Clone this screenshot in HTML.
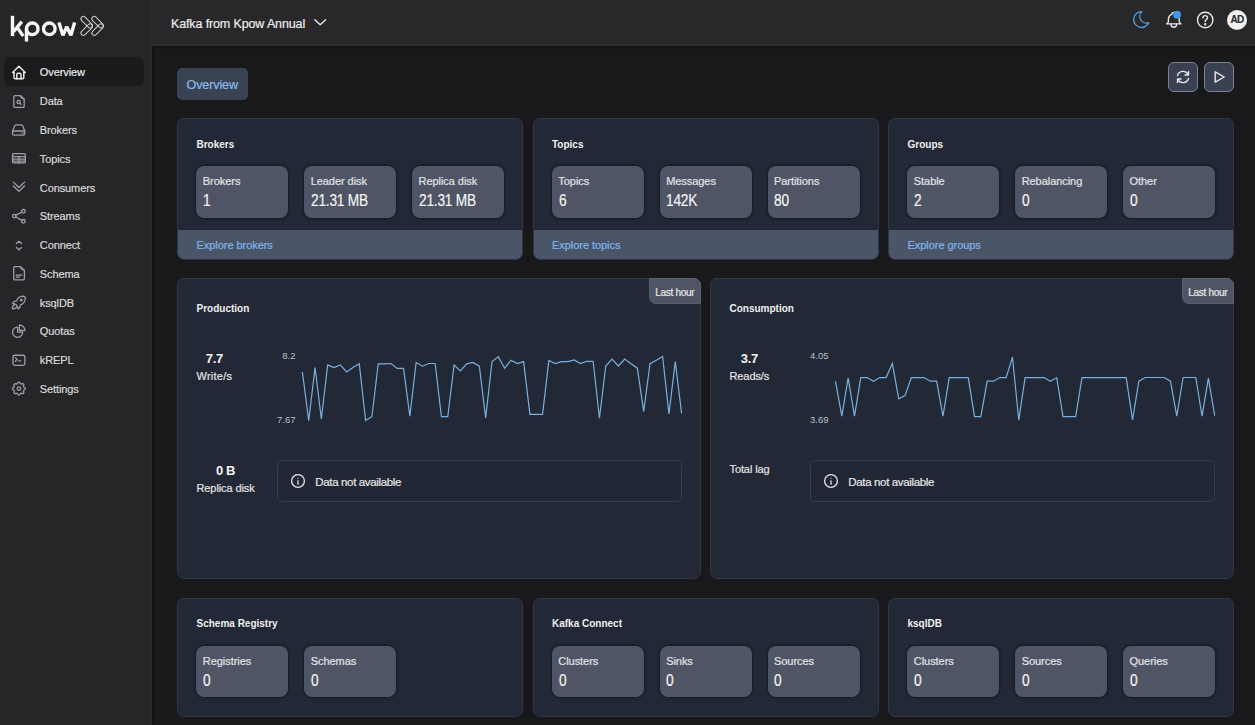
<!DOCTYPE html>
<html><head><meta charset="utf-8">
<style>
*{box-sizing:border-box;margin:0;padding:0}
html,body{width:1255px;height:725px;overflow:hidden;background:#19191b;font-family:"Liberation Sans",sans-serif;color:#e6e6e6;position:relative;-webkit-text-stroke:0.2px currentColor}
.abs{position:absolute}
#side{position:absolute;left:0;top:0;width:152px;height:725px;background:#262628;border-right:2px solid #2c2c2e;box-shadow:1px 0 1.5px rgba(0,0,0,0.45)}
#head{position:absolute;left:152px;top:0;width:1103px;height:46px;background:#28282a;border-bottom:2px solid #2e2e30;box-shadow:0 1px 1.5px rgba(0,0,0,0.35)}
.nav{position:absolute;left:4px;width:140px;height:29px;border-radius:6px}
.nav.act{background:#1b1b1d}
.nav span{position:absolute;left:35.8px;top:9px;font-size:11px;line-height:12px;letter-spacing:-0.1px}
.nav .ic{position:absolute;left:4px;top:4.5px;width:22px;height:20px;overflow:visible}
.nav svg{overflow:visible}
.nav svg{display:block}
.card{position:absolute;background:#222835;border:1px solid #2f3645;border-radius:7px;overflow:hidden}
.ctitle{position:absolute;left:18.5px;top:19.5px;font-size:10px;line-height:12px;font-weight:bold;color:#f0f0f0;letter-spacing:0px;-webkit-text-stroke:0}
.card.ch .ctitle{top:24px}
.stat{position:absolute;top:47px;width:92px;height:51.5px;background:#4f5564;border-radius:8px;box-shadow:0 0 2px 0.5px rgba(10,14,22,0.5)}
.stat .l{position:absolute;left:6.5px;top:9px;font-size:11px;line-height:12px;color:#e2e3e6;letter-spacing:-0.05px}
.stat .v{position:absolute;left:6.8px;top:25px;font-size:16px;line-height:19px;color:#f4f4f4;letter-spacing:-0.25px;transform:scaleX(0.855);transform-origin:0 0}
.foot{position:absolute;left:0;right:0;bottom:0;height:28.5px;background:#4a5568}
.foot span{position:absolute;left:18.5px;top:8.5px;font-size:11px;line-height:12px;color:#80b6ee;letter-spacing:-0.05px}
.tag{position:absolute;right:-1px;top:-1px;width:51.5px;height:26px;background:#4f5564;border:1px solid #596071;border-bottom-left-radius:7px;border-top-right-radius:7px;font-size:10px;line-height:27px;text-align:center;color:#e8e8e8;letter-spacing:-0.3px}
.card.ch{overflow:visible}
.metric{position:absolute;left:18.5px;text-align:center}
.metric .b{font-size:13px;line-height:15px;font-weight:bold;color:#f2f2f2;letter-spacing:-0.3px;-webkit-text-stroke:0}
.metric .u{font-size:11px;line-height:13px;color:#e4e4e4;margin-top:3.5px;letter-spacing:-0.1px}
.ax{position:absolute;left:0;width:117.5px;text-align:right;font-size:9.5px;line-height:11px;color:#bcc0c8;-webkit-text-stroke:0}
.na{position:absolute;left:98.5px;top:181px;width:405px;height:41.5px;border:1px solid #353c4b;border-radius:5px;background:repeating-conic-gradient(#1f2533 0 25%, #232936 0 50%) 0 0/4px 4px}
.na .nai{position:absolute;left:12.3px;top:11.5px;width:16px;height:16px}
.na .nai svg{display:block}
.na span{position:absolute;left:37.8px;top:14.5px;font-size:11.5px;line-height:12px;color:#e6e6e6;letter-spacing:-0.35px}
.btn{position:absolute;top:61.5px;width:30px;height:30.5px;border:1px solid #7a8290;border-radius:6px;background:#384051}
.btn svg{position:absolute;left:-1px;top:-1px}
</style></head><body>
<div id="side"></div>
<div id="head"></div>
<svg class="abs" style="left:8px;top:12px" width="100" height="34" viewBox="0 0 100 34" fill="none">
<g stroke="#f6f6f6" stroke-width="3.4" stroke-linecap="butt">
<path d="M4.5 3.8 V24.1"/>
<path d="M5.5 19.8 L13.8 9.6"/>
<path d="M9.4 15.6 L15.2 24.1"/>
<path d="M18.5 16.8 V29.6"/>
<circle cx="24.25" cy="16.8" r="5.8"/>
<circle cx="41.3" cy="16.8" r="5.8"/>
<path d="M50.9 10.5 L54.9 23.3 L58.8 14.8 L62.9 23.3 L66.6 10.5" stroke-linejoin="bevel"/>
</g>
<g stroke="#cdcdcd" stroke-width="1" fill="none">
<rect x="76.3" y="3.05" width="4.8" height="14.2" rx="2.4" transform="rotate(-45 78.7 10.15)"/>
<rect x="76.3" y="10.55" width="4.8" height="14.2" rx="2.4" transform="rotate(45 78.7 17.65)"/>
<rect x="87.2" y="3.05" width="4.8" height="14.2" rx="2.4" transform="rotate(-45 89.6 10.15)"/>
<rect x="87.2" y="10.55" width="4.8" height="14.2" rx="2.4" transform="rotate(45 89.6 17.65)"/>
</g>
</svg>
<div class="nav act" style="top:57.0px"><div class="ic"><svg width="22" height="20" viewBox="0 0 22 20" fill="none" stroke="#9ca0a8" stroke-width="1.3" stroke-linecap="round" stroke-linejoin="round" ><g transform="translate(2.5 2.1) scale(0.7)" stroke="#ececec" stroke-width="2.1"><path d="M5 12l-2 0l9 -9l9 9l-2 0"/><path d="M5 12v7a2 2 0 0 0 2 2h10a2 2 0 0 0 2 -2v-7"/><path d="M9 21v-6a2 2 0 0 1 2 -2h2a2 2 0 0 1 2 2v6"/></g></svg></div><span style="color:#e8e8e8">Overview</span></div>
<div class="nav" style="top:86.0px"><div class="ic"><svg width="22" height="20" viewBox="0 0 22 20" fill="none" stroke="#9ca0a8" stroke-width="1.3" stroke-linecap="round" stroke-linejoin="round" ><path d="M7.1 4.55 H12.4 L16.15 8.3 V15.2 Q16.15 16.45 14.9 16.45 H7.1 Q5.85 16.45 5.85 15.2 V5.8 Q5.85 4.55 7.1 4.55 Z"/><path d="M12.4 4.55 Q12.6 6.9 14.3 7.3 Q15.9 7.6 16.15 8.3"/><circle cx="10.6" cy="11" r="1.6"/><path d="M11.8 12.2 L13 13.4"/></svg></div><span style="color:#d9d9d9">Data</span></div>
<div class="nav" style="top:115.0px"><div class="ic"><svg width="22" height="20" viewBox="0 0 22 20" fill="none" stroke="#9ca0a8" stroke-width="1.3" stroke-linecap="round" stroke-linejoin="round" ><path d="M4.55 11 L6.8 5.7 Q7.2 4.85 8.2 4.85 H13.2 Q14.2 4.85 14.6 5.7 L16.85 11"/><rect x="4.55" y="11" width="12.3" height="4.2" rx="1.4"/><path d="M14 13.1 H14.1 M15.5 13.1 H15.6"/></svg></div><span style="color:#d9d9d9">Brokers</span></div>
<div class="nav" style="top:143.7px"><div class="ic"><svg width="22" height="20" viewBox="0 0 22 20" fill="none" stroke="#9ca0a8" stroke-width="1.3" stroke-linecap="round" stroke-linejoin="round" ><rect x="4.55" y="5.55" width="12.7" height="9.4" rx="1"/><path d="M4.55 8.6 H17.25 M4.55 11.1 H17.25 M4.55 13.1 H17.25 M10.9 8.6 V14.95"/></svg></div><span style="color:#d9d9d9">Topics</span></div>
<div class="nav" style="top:172.5px"><div class="ic"><svg width="22" height="20" viewBox="0 0 22 20" fill="none" stroke="#9ca0a8" stroke-width="1.3" stroke-linecap="round" stroke-linejoin="round" ><path d="M5.4 5.1 L10.9 10.5 L16.5 5.1 M5.4 9 L10.9 14.4 L16.5 9"/></svg></div><span style="color:#d9d9d9">Consumers</span></div>
<div class="nav" style="top:201.2px"><div class="ic"><svg width="22" height="20" viewBox="0 0 22 20" fill="none" stroke="#9ca0a8" stroke-width="1.3" stroke-linecap="round" stroke-linejoin="round" ><circle cx="6.3" cy="10.1" r="1.8"/><circle cx="15.4" cy="5.3" r="1.8"/><circle cx="15.4" cy="15.3" r="1.8"/><path d="M7.9 9.2 L13.8 6.2 M7.9 11 L13.8 14.4"/></svg></div><span style="color:#d9d9d9">Streams</span></div>
<div class="nav" style="top:230.0px"><div class="ic"><svg width="22" height="20" viewBox="0 0 22 20" fill="none" stroke="#9ca0a8" stroke-width="1.3" stroke-linecap="round" stroke-linejoin="round" ><path d="M8.4 8.5 L10.95 6.2 L13.5 8.5 M8.4 12.4 L10.95 14.7 L13.5 12.4"/></svg></div><span style="color:#d9d9d9">Connect</span></div>
<div class="nav" style="top:258.7px"><div class="ic"><svg width="22" height="20" viewBox="0 0 22 20" fill="none" stroke="#9ca0a8" stroke-width="1.3" stroke-linecap="round" stroke-linejoin="round" ><path d="M7 3.6 H12.6 L16.4 7.4 V15.6 Q16.4 16.9 15.1 16.9 H7 Q5.7 16.9 5.7 15.6 V4.9 Q5.7 3.6 7 3.6 Z"/><path d="M12.6 3.6 Q12.8 6.2 14.6 6.7 Q16.1 7 16.4 7.4"/><path d="M8.2 12.2 H14 M8.2 14.1 H11.5"/></svg></div><span style="color:#d9d9d9">Schema</span></div>
<div class="nav" style="top:287.5px"><div class="ic"><svg width="22" height="20" viewBox="0 0 22 20" fill="none" stroke="#9ca0a8" stroke-width="1.3" stroke-linecap="round" stroke-linejoin="round" ><g transform="translate(1.3 0.9) scale(0.8)" stroke-width="1.6"><path d="M4 13a8 8 0 0 1 7 7a6 6 0 0 0 3 -5a9 9 0 0 0 6 -8a3 3 0 0 0 -3 -3a9 9 0 0 0 -8 6a6 6 0 0 0 -5 3"/><path d="M7 14a6 6 0 0 0 -3 6a6 6 0 0 0 6 -3"/><circle cx="15" cy="9" r="1"/></g></svg></div><span style="color:#d9d9d9">ksqlDB</span></div>
<div class="nav" style="top:316.2px"><div class="ic"><svg width="22" height="20" viewBox="0 0 22 20" fill="none" stroke="#9ca0a8" stroke-width="1.3" stroke-linecap="round" stroke-linejoin="round" ><path d="M9.6 6.1 A5.1 5.1 0 1 0 14.7 11.2 H9.6 Z"/><path d="M11.4 4 A5.5 5.5 0 0 1 16.9 9.5 H11.4 Z"/></svg></div><span style="color:#d9d9d9">Quotas</span></div>
<div class="nav" style="top:345.0px"><div class="ic"><svg width="22" height="20" viewBox="0 0 22 20" fill="none" stroke="#9ca0a8" stroke-width="1.3" stroke-linecap="round" stroke-linejoin="round" ><rect x="4.95" y="5.25" width="11.9" height="10.1" rx="1.8"/><path d="M7.4 7.6 L9.1 9.4 L7.4 11.2 M10.5 10.9 H12.7"/></svg></div><span style="color:#d9d9d9">kREPL</span></div>
<div class="nav" style="top:373.7px"><div class="ic"><svg width="22" height="20" viewBox="0 0 22 20" fill="none" stroke="#9ca0a8" stroke-width="1.3" stroke-linecap="round" stroke-linejoin="round" ><g transform="translate(2.26 1.96) scale(0.72)" stroke-width="1.8"><path d="M10.325 4.317c.426 -1.756 2.924 -1.756 3.35 0a1.724 1.724 0 0 0 2.573 1.066c1.543 -.94 3.31 .826 2.37 2.37a1.724 1.724 0 0 0 1.065 2.572c1.756 .426 1.756 2.924 0 3.35a1.724 1.724 0 0 0 -1.066 2.573c.94 1.543 -.826 3.31 -2.37 2.37a1.724 1.724 0 0 0 -2.572 1.065c-.426 1.756 -2.924 1.756 -3.35 0a1.724 1.724 0 0 0 -2.573 -1.066c-1.543 .94 -3.31 -.826 -2.37 -2.37a1.724 1.724 0 0 0 -1.065 -2.572c-1.756 -.426 -1.756 -2.924 0 -3.35a1.724 1.724 0 0 0 1.066 -2.573c-.94 -1.543 .826 -3.31 2.37 -2.37c1 .608 2.296 .07 2.572 -1.065z"/><path d="M9.5 12a2.5 2.5 0 1 0 5 0a2.5 2.5 0 0 0 -5 0"/></g></svg></div><span style="color:#d9d9d9">Settings</span></div>

<div class="abs" style="left:171px;top:16.8px;font-size:12.5px;color:#ececec;letter-spacing:-0.13px">Kafka from Kpow Annual</div>
<svg class="abs" style="left:312px;top:16px" width="16" height="12" viewBox="0 0 16 12" fill="none" stroke="#e8e8e8" stroke-width="1.4" stroke-linecap="round" stroke-linejoin="round"><path d="M2.8 3.8 L8.2 8.8 L13.6 3.8"/></svg>
<svg class="abs" style="left:1131.3px;top:9.3px" width="24" height="24" viewBox="0 0 24 24" fill="none"><g transform="scale(0.88)" stroke="#4aa3ea" stroke-width="1.45" stroke-linecap="round" stroke-linejoin="round"><path d="M12 3c.132 0 .263 0 .393 0a7.5 7.5 0 0 0 7.92 12.446a9 9 0 1 1 -8.313 -12.454z"/></g></svg>
<svg class="abs" style="left:1163.2px;top:9.8px" width="24" height="24" viewBox="0 0 24 24" fill="none"><g transform="scale(0.9 0.82)" stroke="#e8e8e8" stroke-width="1.6" stroke-linecap="round" stroke-linejoin="round"><path d="M10 5a2 2 0 1 1 4 0a7 7 0 0 1 4 6v3a4 4 0 0 0 2 3h-16a4 4 0 0 0 2 -3v-3a7 7 0 0 1 4 -6"/><path d="M9 17v1a3 3 0 0 0 6 0v-1"/></g><circle cx="14.1" cy="4.7" r="3.9" fill="#4596e6"/></svg>
<svg class="abs" style="left:1195px;top:10px" width="20" height="20" viewBox="0 0 20 20" fill="none" stroke="#e8e8e8" stroke-width="1.4" stroke-linecap="round"><circle cx="10.2" cy="10" r="7.7"/><path d="M7.9 8 Q7.9 5.6 10.2 5.6 Q12.5 5.6 12.5 7.7 Q12.5 9 11 9.8 Q10.2 10.3 10.2 11.6"/><circle cx="10.2" cy="14.2" r="0.5" fill="#e8e8e8"/></svg>
<div class="abs" style="left:1227px;top:10px;width:20px;height:20px;border-radius:50%;background:#f1f1f1;color:#303030;font-size:10px;font-weight:bold;text-align:center;line-height:20px;letter-spacing:-0.6px">AD</div>
<div class="abs" style="left:177px;top:67.5px;width:70.5px;height:32px;border-radius:5px;background:#394354;color:#8ebbec;font-size:12.5px;line-height:34px;text-align:center;letter-spacing:-0.1px">Overview</div>
<div class="btn" style="left:1168px"><svg width="30" height="30" viewBox="0 0 30 30" fill="none" stroke="#e8e8e8" stroke-width="1.4" stroke-linecap="round" stroke-linejoin="round"><path d="M9.5 13.5 A5.8 5.8 0 0 1 20.2 12.5 M20.5 9.5 V13 H17 M20.5 16.5 A5.8 5.8 0 0 1 9.8 17.5 M9.5 20.5 V17 H13"/></svg></div>
<div class="btn" style="left:1204px"><svg width="30" height="30" viewBox="0 0 30 30" fill="none" stroke="#e8e8e8" stroke-width="1.4" stroke-linejoin="round"><path d="M11.2 9.8 L20.2 15 L11.2 20.2 Z"/></svg></div>

<div class="card" style="left:177px;top:118px;width:346px;height:141.5px"><div class="ctitle" style="top:19.5px">Brokers</div><div class="stat" style="left:18.3px;height:51.5px"><div class="l">Brokers</div><div class="v">1</div></div><div class="stat" style="left:126.15px;height:51.5px"><div class="l">Leader disk</div><div class="v">21.31 MB</div></div><div class="stat" style="left:234.0px;height:51.5px"><div class="l">Replica disk</div><div class="v">21.31 MB</div></div><div class="foot"><span>Explore brokers</span></div></div>
<div class="card" style="left:532.5px;top:118px;width:346px;height:141.5px"><div class="ctitle" style="top:19.5px">Topics</div><div class="stat" style="left:18.3px;height:51.5px"><div class="l">Topics</div><div class="v">6</div></div><div class="stat" style="left:126.15px;height:51.5px"><div class="l">Messages</div><div class="v">142K</div></div><div class="stat" style="left:234.0px;height:51.5px"><div class="l">Partitions</div><div class="v">80</div></div><div class="foot"><span>Explore topics</span></div></div>
<div class="card" style="left:888px;top:118px;width:346px;height:141.5px"><div class="ctitle" style="top:19.5px">Groups</div><div class="stat" style="left:18.3px;height:51.5px"><div class="l">Stable</div><div class="v">2</div></div><div class="stat" style="left:126.15px;height:51.5px"><div class="l">Rebalancing</div><div class="v">0</div></div><div class="stat" style="left:234.0px;height:51.5px"><div class="l">Other</div><div class="v">0</div></div><div class="foot"><span>Explore groups</span></div></div>
<div class="card" style="left:177px;top:598px;width:346px;height:118.5px"><div class="ctitle" style="top:18.7px">Schema Registry</div><div class="stat" style="left:18.3px;height:50.8px"><div class="l">Registries</div><div class="v">0</div></div><div class="stat" style="left:126.15px;height:50.8px"><div class="l">Schemas</div><div class="v">0</div></div></div>
<div class="card" style="left:532.5px;top:598px;width:346px;height:118.5px"><div class="ctitle" style="top:18.7px">Kafka Connect</div><div class="stat" style="left:18.3px;height:50.8px"><div class="l">Clusters</div><div class="v">0</div></div><div class="stat" style="left:126.15px;height:50.8px"><div class="l">Sinks</div><div class="v">0</div></div><div class="stat" style="left:234.0px;height:50.8px"><div class="l">Sources</div><div class="v">0</div></div></div>
<div class="card" style="left:888px;top:598px;width:346px;height:118.5px"><div class="ctitle" style="top:18.7px">ksqlDB</div><div class="stat" style="left:18.3px;height:50.8px"><div class="l">Clusters</div><div class="v">0</div></div><div class="stat" style="left:126.15px;height:50.8px"><div class="l">Sources</div><div class="v">0</div></div><div class="stat" style="left:234.0px;height:50.8px"><div class="l">Queries</div><div class="v">0</div></div></div>

<div class="card ch" style="left:177px;top:278px;width:523.5px;height:301px"><div class="ctitle">Production</div><div class="tag">Last hour</div><div class="metric" style="top:72px"><div class="b">7.7</div><div class="u" style="letter-spacing:0.25px">Write/s</div></div><div class="metric" style="top:184px"><div class="b">0 B</div><div class="u">Replica disk</div></div><div class="ax" style="top:71px">8.2</div><div class="ax" style="top:135px">7.67</div><div class="na"><div class="nai"><svg width="16" height="16" viewBox="0 0 16 16" fill="none" stroke="#e6e6e6" stroke-width="1.3"><circle cx="8" cy="8" r="6.4"/><path d="M8 7.3 V10.8 M7.2 10.8 H8.8" stroke-width="1.2"/><circle cx="8" cy="5.3" r="0.6" fill="#e6e6e6" stroke="none"/></svg></div><span>Data not available</span></div></div>
<div class="card ch" style="left:710px;top:278px;width:523.5px;height:301px"><div class="ctitle">Consumption</div><div class="tag">Last hour</div><div class="metric" style="top:72px"><div class="b">3.7</div><div class="u" style="letter-spacing:-0.1px">Reads/s</div></div><div class="metric" style="top:184px"><div class="u" style="margin-top:0">Total lag</div></div><div class="ax" style="top:71px">4.05</div><div class="ax" style="top:135px">3.69</div><div class="na"><div class="nai"><svg width="16" height="16" viewBox="0 0 16 16" fill="none" stroke="#e6e6e6" stroke-width="1.3"><circle cx="8" cy="8" r="6.4"/><path d="M8 7.3 V10.8 M7.2 10.8 H8.8" stroke-width="1.2"/><circle cx="8" cy="5.3" r="0.6" fill="#e6e6e6" stroke="none"/></svg></div><span>Data not available</span></div></div>

<svg class="abs" style="left:0;top:0" width="1255" height="725" fill="none">
<polyline points="302.40,372.00 308.72,420.60 315.04,367.60 321.36,419.00 327.68,364.90 334.00,367.60 340.32,364.90 346.64,372.00 352.96,367.60 359.28,363.80 365.60,420.60 371.92,416.70 378.24,363.80 384.56,363.80 390.88,363.50 397.20,368.40 403.52,368.40 409.84,416.20 416.16,362.40 422.48,366.20 428.80,363.50 435.12,363.50 441.44,416.70 447.76,416.70 454.08,365.10 460.40,370.90 466.72,363.80 473.04,362.40 479.36,366.20 485.68,418.00 492.00,361.60 498.32,356.60 504.64,368.20 510.96,360.20 517.28,363.50 523.60,361.60 529.92,414.30 536.24,414.30 542.56,414.30 548.88,360.50 555.20,363.50 561.52,361.60 567.84,361.60 574.16,359.90 580.48,363.50 586.80,361.30 593.12,361.30 599.44,418.30 605.76,366.00 612.08,359.10 618.40,366.00 624.72,359.10 631.04,363.70 637.36,368.20 643.68,411.70 650.00,363.70 656.32,360.30 662.64,356.60 668.96,413.90 675.28,361.50 681.60,413.40" stroke="#7ab0dd" stroke-width="1.2" stroke-linejoin="miter"/>
<polyline points="835.50,381.40 841.82,416.20 848.14,378.10 854.46,416.20 860.78,377.60 867.10,377.60 873.42,381.20 879.74,377.60 886.06,377.60 892.38,363.60 898.70,398.90 905.02,395.60 911.34,377.60 917.66,377.60 923.98,377.60 930.30,381.20 936.62,381.20 942.94,416.20 949.26,377.60 955.58,377.60 961.90,377.60 968.22,377.60 974.54,416.70 980.86,416.70 987.18,381.20 993.50,381.20 999.82,377.60 1006.14,377.60 1012.46,357.10 1018.78,420.10 1025.10,377.60 1031.42,377.60 1037.74,377.60 1044.06,377.60 1050.38,381.20 1056.70,377.60 1063.02,416.70 1069.34,416.70 1075.66,416.70 1081.98,377.60 1088.30,377.60 1094.62,377.60 1100.94,377.60 1107.26,377.60 1113.58,377.60 1119.90,377.60 1126.22,377.60 1132.54,420.00 1138.86,381.20 1145.18,377.50 1151.50,377.50 1157.82,377.50 1164.14,377.50 1170.46,381.20 1176.78,416.20 1183.10,377.50 1189.42,377.50 1195.74,377.50 1202.06,416.20 1208.38,378.10 1214.70,415.60" stroke="#7ab0dd" stroke-width="1.2" stroke-linejoin="miter"/>
</svg>
</body></html>
